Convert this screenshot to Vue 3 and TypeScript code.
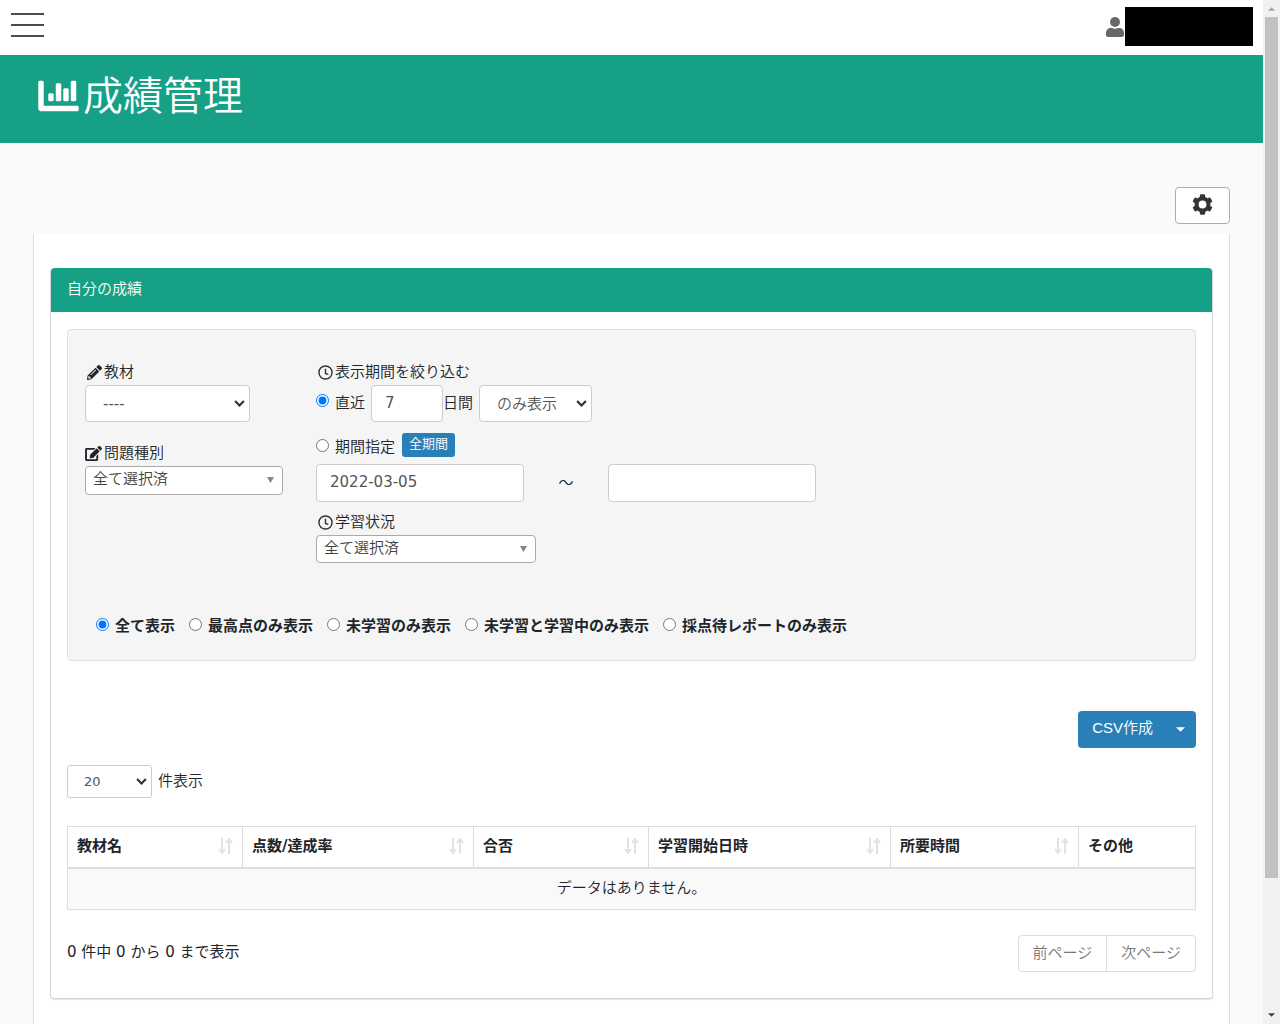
<script setup lang="ts">
import { ref } from 'vue'

interface Column {
  title: string
  width: number
  sortable: boolean
}

const columns: Column[] = [
  { title: '教材名', width: 175, sortable: true },
  { title: '点数/達成率', width: 231, sortable: true },
  { title: '合否', width: 175, sortable: true },
  { title: '学習開始日時', width: 242, sortable: true },
  { title: '所要時間', width: 188, sortable: true },
  { title: 'その他', width: 117, sortable: false },
]

const displayModes: string[] = [
  '全て表示',
  '最高点のみ表示',
  '未学習のみ表示',
  '未学習と学習中のみ表示',
  '採点待レポートのみ表示',
]

const displayMode = ref(displayModes[0])
const rangeMode = ref('recent')
const days = ref('7')
const dateFrom = ref('2022-03-05')
const dateTo = ref('')
</script>

<template>
  <div class="shell">
    <div class="page">
      <header class="topbar">
        <button class="menu" type="button" aria-label="メニュー"><i></i><i></i><i></i></button>
        <div class="user">
          <svg width="18" height="20" viewBox="0 0 18 20" fill="#686868" aria-hidden="true">
            <circle cx="9" cy="5" r="5" />
            <path d="M0 18v-2c0-3 2-5 5-5h1c2 1 4 1 6 0h1c3 0 5 2 5 5v2c0 1-1 2-2 2H2c-1 0-2-1-2-2z" />
          </svg>
          <span class="mask"></span>
        </div>
      </header>

      <div class="hero">
        <svg width="41" height="40" viewBox="0 0 512 512" fill="#fff" stroke="#fff" stroke-width="6" aria-hidden="true">
          <path d="M332.8 320h38.4c6.4 0 12.8-6.4 12.8-12.8V172.8c0-6.4-6.4-12.8-12.8-12.8h-38.4c-6.4 0-12.8 6.4-12.8 12.8v134.4c0 6.4 6.4 12.8 12.8 12.8zm96 0h38.4c6.4 0 12.8-6.4 12.8-12.8V76.8c0-6.4-6.4-12.8-12.8-12.8h-38.4c-6.4 0-12.8 6.4-12.8 12.8v230.4c0 6.4 6.4 12.8 12.8 12.8zm-288 0h38.4c6.4 0 12.8-6.4 12.8-12.8v-70.4c0-6.4-6.4-12.8-12.8-12.8h-38.4c-6.4 0-12.8 6.4-12.8 12.8v70.4c0 6.4 6.4 12.8 12.8 12.8zm96 0h38.4c6.4 0 12.8-6.4 12.8-12.8V108.8c0-6.4-6.4-12.8-12.8-12.8h-38.4c-6.4 0-12.8 6.4-12.8 12.8v198.4c0 6.4 6.4 12.8 12.8 12.8zM496 384H64V80c0-8.84-7.16-16-16-16H16C7.16 64 0 71.16 0 80v336c0 17.67 14.33 32 32 32h464c8.84 0 16-7.16 16-16v-32c0-8.84-7.16-16-16-16z" />
        </svg>
        <h1>成績管理</h1>
      </div>

      <main class="content">
        <div class="tools">
          <button class="gear" type="button" aria-label="設定">
            <svg width="21" height="21" viewBox="0 0 512 512" fill="#333" aria-hidden="true">
              <path fill-rule="evenodd" d="M487.4 315.7l-42.6-24.6c4.3-23.2 4.3-47 0-70.2l42.6-24.6c4.9-2.8 7.1-8.6 5.5-14-11.1-35.6-30-67.8-54.7-94.6-3.8-4.1-10-5.1-14.8-2.3L380.8 110c-17.9-15.4-38.5-27.3-60.8-35.1V25.8c0-5.6-3.9-10.5-9.4-11.7-36.7-8.2-74.3-7.8-109.2 0-5.5 1.2-9.4 6.1-9.4 11.7V75c-22.2 7.9-42.8 19.8-60.8 35.1L88.7 85.5c-4.9-2.8-11-1.9-14.8 2.3-24.7 26.7-43.6 58.9-54.7 94.6-1.7 5.4.6 11.2 5.5 14L67.3 221c-4.3 23.2-4.3 47 0 70.2l-42.6 24.6c-4.9 2.8-7.1 8.6-5.5 14 11.1 35.6 30 67.8 54.7 94.6 3.8 4.1 10 5.1 14.8 2.3l42.6-24.6c17.9 15.4 38.5 27.3 60.8 35.1v49.2c0 5.6 3.9 10.5 9.4 11.7 36.7 8.2 74.3 7.8 109.2 0 5.5-1.2 9.4-6.1 9.4-11.7v-49.2c22.2-7.9 42.8-19.8 60.8-35.1l42.6 24.6c4.9 2.8 11 1.9 14.8-2.3 24.7-26.7 43.6-58.9 54.7-94.6 1.5-5.5-.7-11.3-5.6-14.1zM256 352a96 96 0 1 1 0-192 96 96 0 0 1 0 192z" />
            </svg>
          </button>
        </div>

        <div class="card">
          <section class="panel">
            <h2>自分の成績</h2>
            <div class="panel-body">
              <form class="well" @submit.prevent>
                <div class="filters">
                  <div class="col-material">
                    <label class="caption" for="material">
                      <svg class="icon" viewBox="0 0 512 512" aria-hidden="true">
                        <path fill-rule="evenodd" d="M498 142l-46 46c-5 5-13 5-17 0L324 77c-5-5-5-12 0-17l46-46c19-19 49-19 68 0l60 60c19 19 19 49 0 68zm-214-42L22 362 0 484c-3 16 12 30 28 28l122-22 262-262c5-5 5-13 0-17L301 100c-4-5-12-5-17 0zM144 340c-6 5-14 5-20 0s-5-14 0-20l154-154c6-5 14-5 20 0s5 14 0 20zM88 424h48v36l-64 12-32-31 12-65h36z" />
                      </svg>
                      教材
                    </label>
                    <div class="picker picker-material">
                      <select id="material"><option>----</option></select>
                      <svg class="chevron" viewBox="0 0 10 7" aria-hidden="true"><path d="M1 1l4 4 4-4" /></svg>
                    </div>
                    <label class="caption caption-kind" for="kind">
                      <svg class="icon icon-wide" viewBox="0 0 576 512" aria-hidden="true">
                        <path d="M402.6 83.2l90.2 90.2c3.8 3.8 3.8 10 0 13.8L274.4 405.6l-92.8 10.3c-12.4 1.4-22.9-9.1-21.5-21.5l10.3-92.8L388.8 83.2c3.8-3.8 10-3.8 13.8 0zm162-22.9l-48.8-48.8c-15.2-15.2-39.9-15.2-55.2 0l-35.4 35.4c-3.8 3.8-3.8 10 0 13.8l90.2 90.2c3.8 3.8 10 3.8 13.8 0l35.4-35.4c15.2-15.3 15.2-40 0-55.2zM384 346.2V448H64V128h229.8c3.2 0 6.2-1.3 8.5-3.5l40-40c7.6-7.6 2.2-20.5-8.5-20.5H48C21.5 64 0 85.5 0 112v352c0 26.5 21.5 48 48 48h352c26.5 0 48-21.5 48-48V306.2c0-10.7-12.9-16-20.5-8.5l-40 40c-2.2 2.3-3.5 5.3-3.5 8.5z" />
                      </svg>
                      問題種別
                    </label>
                    <div class="picker compact picker-kind">
                      <select id="kind"><option>全て選択済</option></select>
                      <svg class="caret" viewBox="0 0 8 7" aria-hidden="true"><path d="M0 0h8L4 7z" /></svg>
                    </div>
                  </div>

                  <div class="col-range">
                    <div class="caption">
                      <svg class="icon clock" viewBox="0 0 16 16" aria-hidden="true"><circle cx="8" cy="8" r="7" /><path d="M8 4v5l3 1" /></svg>
                      表示期間を絞り込む
                    </div>
                    <div class="recent">
                      <label class="radio"><input v-model="rangeMode" type="radio" name="range" value="recent" />直近</label>
                      <input v-model="days" class="field days" type="text" aria-label="日数" />
                      <span>日間</span>
                      <div class="picker picker-only">
                        <select aria-label="表示条件"><option>のみ表示</option></select>
                        <svg class="chevron" viewBox="0 0 10 7" aria-hidden="true"><path d="M1 1l4 4 4-4" /></svg>
                      </div>
                    </div>
                    <div class="period">
                      <label class="radio"><input v-model="rangeMode" type="radio" name="range" value="period" />期間指定</label>
                      <button class="all" type="button">全期間</button>
                    </div>
                    <div class="dates">
                      <input v-model="dateFrom" class="field" type="text" aria-label="開始日" />
                      <span>～</span>
                      <input v-model="dateTo" class="field" type="text" aria-label="終了日" />
                    </div>
                    <label class="caption caption-status" for="status">
                      <svg class="icon clock" viewBox="0 0 16 16" aria-hidden="true"><circle cx="8" cy="8" r="7" /><path d="M8 4v5l3 1" /></svg>
                      学習状況
                    </label>
                    <div class="picker compact picker-status">
                      <select id="status"><option>全て選択済</option></select>
                      <svg class="caret" viewBox="0 0 8 7" aria-hidden="true"><path d="M0 0h8L4 7z" /></svg>
                    </div>
                  </div>
                </div>

                <div class="modes">
                  <label v-for="mode in displayModes" :key="mode" class="radio">
                    <input v-model="displayMode" type="radio" name="mode" :value="mode" />{{ mode }}
                  </label>
                </div>
              </form>

              <div class="export">
                <button class="csv" type="button">CSV作成</button>
                <button class="more" type="button" aria-label="その他の出力">
                  <svg width="9" height="5" viewBox="0 0 8 4" fill="#fff" aria-hidden="true"><path d="M0 0h8L4 4z" /></svg>
                </button>
              </div>

              <div class="length">
                <div class="picker picker-length">
                  <select id="length"><option>20</option></select>
                  <svg class="chevron" viewBox="0 0 10 7" aria-hidden="true"><path d="M1 1l4 4 4-4" /></svg>
                </div>
                <label for="length">件表示</label>
              </div>

              <table>
                <colgroup>
                  <col v-for="column in columns" :key="column.title" :style="{ width: column.width + 'px' }" />
                </colgroup>
                <thead>
                  <tr>
                    <th v-for="column in columns" :key="column.title" scope="col">
                      <div class="head">
                        {{ column.title }}
                        <svg v-if="column.sortable" width="15" height="16" viewBox="0 0 15 16" aria-hidden="true">
                          <path d="M4 0v14M1 11l3 4 3-4M11 16V2M8 5l3-4 3 4" />
                        </svg>
                      </div>
                    </th>
                  </tr>
                </thead>
                <tbody>
                  <tr><td :colspan="columns.length">データはありません。</td></tr>
                </tbody>
              </table>

              <div class="footer">
                <span>0 件中 0 から 0 まで表示</span>
                <nav class="pager" aria-label="ページ">
                  <a href="#">前ページ</a>
                  <a href="#">次ページ</a>
                </nav>
              </div>
            </div>
          </section>
        </div>
      </main>
    </div>

    <div class="scrollbar" aria-hidden="true">
      <svg width="7" height="4" viewBox="0 0 8 4" fill="#a3a3a3"><path d="M0 4h8L4 0z" /></svg>
      <div class="track"><div class="thumb"></div></div>
      <svg width="7" height="4" viewBox="0 0 8 4" fill="#404040"><path d="M0 0h8L4 4z" /></svg>
    </div>
  </div>
</template>

<style>
body {
  margin: 0;
  background: #fafafa;
}
</style>

<style scoped>
* {
  box-sizing: border-box;
}

.shell {
  display: flex;
  height: 100vh;
  overflow: hidden;
  font-family: "DejaVu Sans", "Noto Sans CJK JP", sans-serif;
  font-size: 15px;
  font-weight: 350;
  line-height: 24px;
  color: #212529;
}

button,
input,
select {
  font: inherit;
  margin: 0;
}

svg {
  display: block;
  flex: none;
}

.page {
  flex: 1;
  min-width: 0;
  overflow: hidden;
  background: #fafafa;
}

.topbar {
  display: flex;
  justify-content: space-between;
  height: 55px;
  padding: 7px 10px 0 11px;
  background: #fff;
}

.menu {
  display: flex;
  flex-direction: column;
  gap: 9px;
  width: 33px;
  padding: 6px 0 0;
  border: 0;
  background: none;
}

.menu i {
  width: 33px;
  height: 2px;
  background: #4c4c4c;
}

.user {
  display: flex;
  align-items: center;
  gap: 1px;
  height: 39px;
}

.mask {
  width: 128px;
  height: 39px;
  background: #000;
}

.hero {
  display: flex;
  align-items: center;
  gap: 4px;
  height: 88px;
  padding: 0 38px 6px;
  background: #16a085;
  color: #fff;
}

.hero h1 {
  margin: 0;
  font-size: 40px;
  font-weight: 350;
  line-height: 56px;
}

.content {
  padding: 44px 33px 0;
}

.tools {
  display: flex;
  justify-content: flex-end;
  margin-bottom: 10px;
}

.gear {
  display: flex;
  justify-content: center;
  width: 55px;
  height: 37px;
  padding-top: 6px;
  border: 1px solid #adadad;
  border-radius: 4px;
  background: #fff;
}

.card {
  padding: 34px 16px 60px;
  border: solid #ddd;
  border-width: 0 1px;
  background: #fff;
}

.panel {
  border: 1px solid #d5d5d5;
  border-top: 0;
  border-radius: 4px;
  box-shadow: 0 1px 1px rgba(0, 0, 0, 0.1);
}

.panel h2 {
  margin: 0;
  padding: 9px 16px 11px;
  border-radius: 4px 4px 0 0;
  background: #16a085;
  color: #fff;
  font-size: 15px;
  font-weight: 350;
}

.panel-body {
  padding: 17px 16px 26px;
}

.well {
  margin-bottom: 50px;
  padding: 31px 17px 22px;
  border: 1px solid #e0e0e0;
  border-radius: 4px;
  background: #f5f5f5;
}

.filters {
  display: flex;
  gap: 33px;
}

.col-material {
  width: 198px;
}

.caption {
  display: flex;
  align-items: center;
  gap: 2px;
  height: 24px;
  padding-bottom: 2px;
}

.caption-kind {
  margin-top: 20px;
}

.caption-status {
  margin-top: 9px;
}

.icon {
  width: 15px;
  height: 15px;
  margin-left: 2px;
  fill: #212529;
}

.icon-wide {
  width: 17px;
  margin-left: 0;
}

.clock {
  fill: none;
  stroke: #333;
  stroke-width: 1.5;
}

.picker {
  position: relative;
  height: 37px;
}

.picker select {
  appearance: none;
  display: block;
  width: 100%;
  height: 100%;
  padding: 0 17px;
  border: 1px solid #ccc;
  border-radius: 4px;
  background: #fff;
  color: #555;
}

.chevron {
  position: absolute;
  top: 50%;
  right: 5px;
  width: 11px;
  margin-top: -4px;
  fill: none;
  stroke: #333;
  stroke-width: 2;
}

.caret {
  position: absolute;
  top: 11px;
  right: 9px;
  width: 7px;
  fill: #888;
}

.compact {
  height: 29px;
}

.compact select {
  padding: 0 7px 4px;
  border-color: #aaa;
  color: #444;
}

.picker-material {
  width: 165px;
}

.picker-material select {
  font-weight: 400;
}

.picker-only {
  width: 113px;
  margin-left: 6px;
}

.picker-status {
  width: 220px;
  height: 28px;
}

.radio {
  display: flex;
  align-items: center;
  gap: 6px;
}

.radio input {
  width: 13px;
  height: 13px;
  margin-bottom: 4px;
}

.recent {
  display: flex;
  align-items: center;
}

.recent > .radio,
.recent > span {
  padding-bottom: 2px;
}

.field {
  width: 208px;
  height: 38px;
  padding: 0 13px 2px;
  border: 1px solid #ccc;
  border-radius: 4px;
  background: #fff;
  color: #555;
  font-weight: 400;
}

.days {
  width: 72px;
  height: 37px;
  margin-left: 6px;
}

.period {
  display: flex;
  align-items: flex-start;
  gap: 7px;
  height: 24px;
  margin: 11px 0 7px;
}

.period .radio {
  padding-top: 2px;
}

.all {
  height: 24px;
  padding: 0 7px 2px;
  border: 0;
  border-radius: 3px;
  background: #2980b9;
  color: #fff;
  font-size: 13px;
  line-height: 22px;
}

.dates {
  display: flex;
  align-items: center;
}

.dates span {
  width: 84px;
  text-align: center;
}

.modes {
  display: flex;
  gap: 14px;
  margin-top: 51px;
  padding-left: 11px;
  font-weight: 700;
}

.export {
  display: flex;
  justify-content: flex-end;
  margin-bottom: 17px;
}

.export button {
  height: 37px;
  border: 0;
  background: #2980b9;
  color: #fff;
}

.export .csv {
  padding: 0 12px 3px 14px;
  border-radius: 4px 0 0 4px;
  font-family: "Liberation Sans", "Noto Sans CJK JP", sans-serif;
}

.export .more {
  padding: 0 11px;
  border-radius: 0 4px 4px 0;
}

.length {
  display: flex;
  align-items: center;
  gap: 6px;
  margin-bottom: 28px;
}

.length label {
  padding-bottom: 2px;
}

.picker-length {
  width: 85px;
  height: 33px;
}

.picker-length select {
  padding: 0 16px;
  border-radius: 3px;
  font-size: 13px;
  font-weight: 400;
}

table {
  width: 100%;
  table-layout: fixed;
  border: 1px solid #ddd;
  border-collapse: collapse;
}

th {
  padding: 7px 9px 9px;
  border: 1px solid #ddd;
  border-bottom-width: 2px;
  font-weight: 700;
  text-align: left;
}

.head {
  display: flex;
  align-items: center;
  justify-content: space-between;
}

.head svg {
  fill: none;
  stroke: #e2e2e2;
  stroke-width: 2;
}

td {
  padding: 7px 9px 9px;
  background: #f9f9f9;
  text-align: center;
}

.footer {
  display: flex;
  justify-content: space-between;
  margin-top: 25px;
}

.footer > span {
  margin-top: 5px;
  font-weight: 400;
}

.pager {
  display: flex;
}

.pager a {
  height: 37px;
  padding: 5px 14px;
  border: 1px solid #ddd;
  border-radius: 4px 0 0 4px;
  color: #777;
  text-decoration: none;
}

.pager a + a {
  margin-left: -1px;
  border-radius: 0 4px 4px 0;
}

.scrollbar {
  display: flex;
  flex-direction: column;
  align-items: center;
  width: 17px;
  padding: 7px 0;
  background: #f1f1f1;
}

.track {
  flex: 1;
  width: 13px;
  margin: 6px 0;
}

.thumb {
  height: 87%;
  background: #c1c1c1;
}
</style>
